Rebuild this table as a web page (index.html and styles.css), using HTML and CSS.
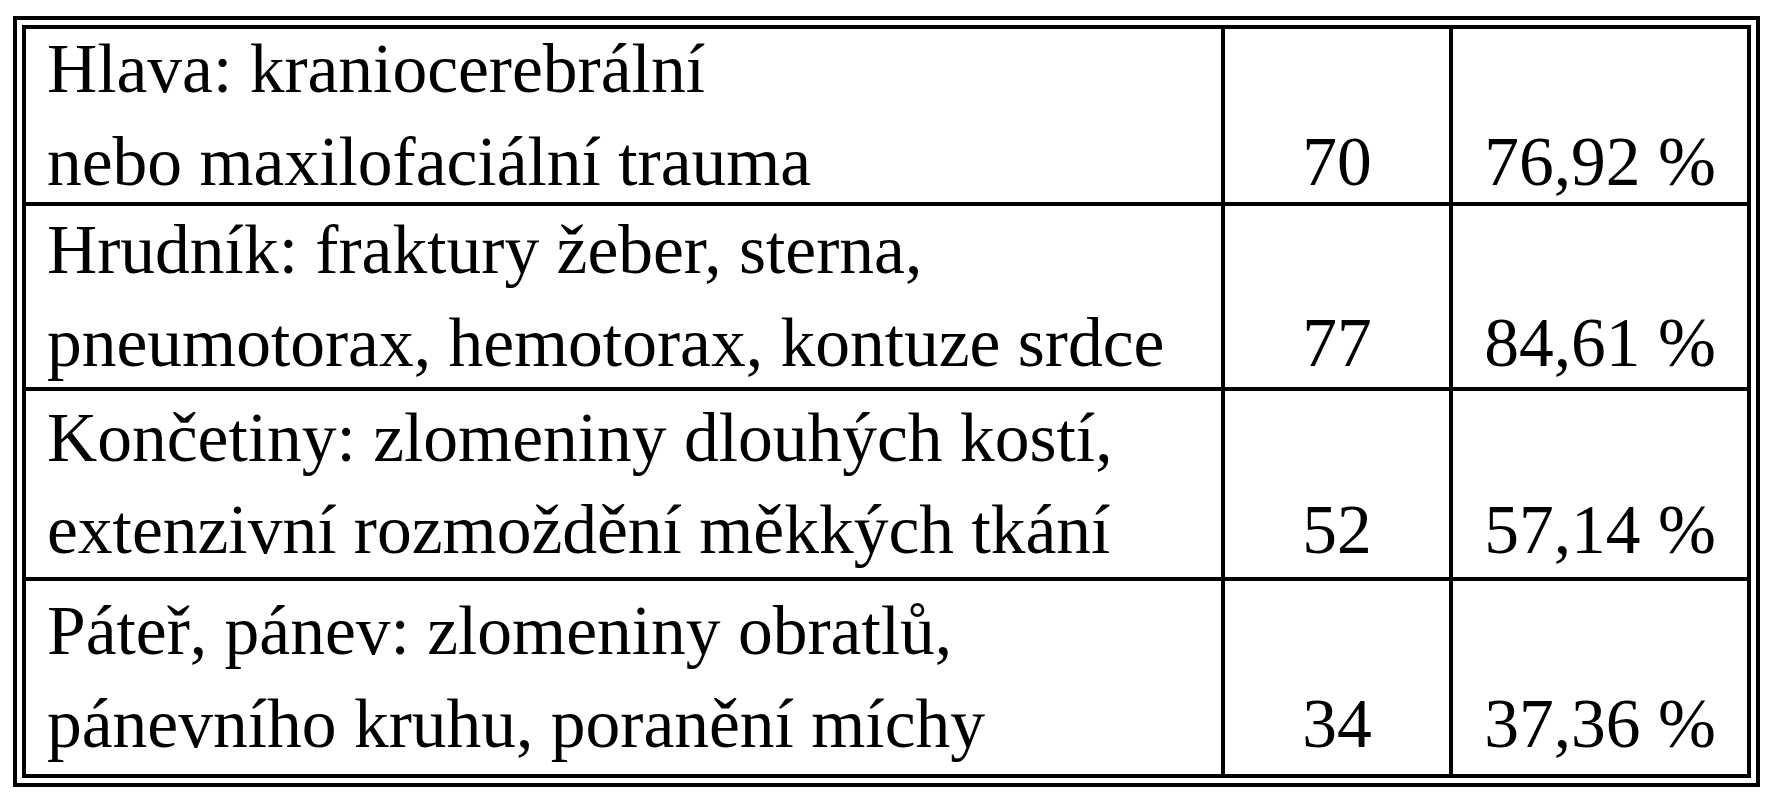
FILE: index.html
```html
<!DOCTYPE html>
<html lang="cs">
<head>
<meta charset="utf-8">
<title>Poranění</title>
<link rel="stylesheet" href="styles.css">
</head>
<body>
<div class="frame">
  <div class="grid">
    <div class="cell label"><div class="lines">Hlava: kraniocerebrální<br>nebo maxilofaciální trauma</div></div>
    <div class="cell num"><div class="lines"><span>70</span></div></div>
    <div class="cell num"><div class="lines"><span>76,92 %</span></div></div>

    <div class="cell label"><div class="lines">Hrudník: fraktury žeber, sterna,<br>pneumotorax, hemotorax, kontuze srdce</div></div>
    <div class="cell num"><div class="lines"><span>77</span></div></div>
    <div class="cell num"><div class="lines"><span>84,61 %</span></div></div>

    <div class="cell label"><div class="lines">Končetiny: zlomeniny dlouhých kostí,<br>extenzivní rozmoždění měkkých tkání</div></div>
    <div class="cell num"><div class="lines"><span>52</span></div></div>
    <div class="cell num"><div class="lines"><span>57,14 %</span></div></div>

    <div class="cell label"><div class="lines">Páteř, pánev: zlomeniny obratlů,<br>pánevního kruhu, poranění míchy</div></div>
    <div class="cell num"><div class="lines"><span>34</span></div></div>
    <div class="cell num"><div class="lines"><span>37,36 %</span></div></div>
  </div>
</div>
</body>
</html>
```

FILE: styles.css
```css
html, body {
  margin: 0;
  padding: 0;
  background: #fff;
}

body {
  font-family: "Liberation Serif", "Times New Roman", serif;
  font-size: 69.5px;
  color: #000;
}

.frame {
  box-sizing: border-box;
  width: 1747px;
  margin: 16px 0 0 13px;
  border: 4px solid #000;
  padding: 5px;
}

.grid {
  display: grid;
  grid-template-columns: 1195px 224px 294px;
  grid-template-rows: 173px 181px 186px 193px;
  gap: 4px;
  border: 4px solid #000;
  background: #000;
}

.cell {
  background: #fff;
  display: flex;
  align-items: center;
  min-width: 0;
}

.lines {
  flex-shrink: 0;
  height: 185px;
  line-height: 92.5px;
  white-space: nowrap;
}

.label .lines {
  padding-left: 21px;
}

.num .lines {
  width: 100%;
  display: flex;
  align-items: flex-end;
  justify-content: center;
}
```
